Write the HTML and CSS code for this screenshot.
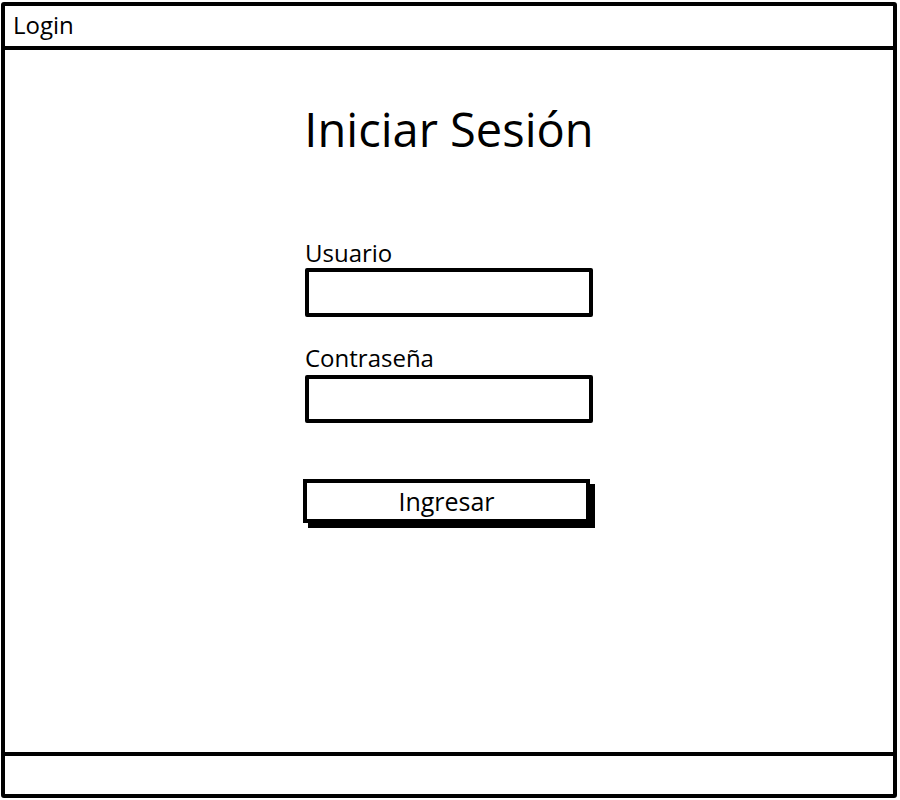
FILE: index.html
```html
<!DOCTYPE html>
<html lang="es">
<head>
<meta charset="utf-8">
<title>Login</title>
<link rel="stylesheet" href="styles.css">
</head>
<body>
<div class="window">
  <header class="titlebar">Login</header>
  <main class="content">
    <h1 class="title">Iniciar Sesión</h1>
    <form class="form">
      <label class="label">Usuario</label>
      <div class="field"></div>
      <label class="label label-second">Contraseña</label>
      <div class="field field-second"></div>
      <button type="button" class="button">Ingresar</button>
    </form>
  </main>
  <footer class="statusbar"></footer>
</div>
</body>
</html>
```

FILE: styles.css
```css
* { box-sizing: border-box; }
html, body { margin: 0; padding: 0; background: #fff; }
body { font-family: "Open Sans", "Noto Sans", sans-serif; color: #000; }
.window {
  width: 896px;
  height: 796px;
  margin: 2px 0 0 1px;
  border: 4px solid #000;
  border-radius: 3px;
  display: flex;
  flex-direction: column;
}
.titlebar {
  height: 44px;
  border-bottom: 4px solid #000;
  font-size: 24px;
  padding: 5px 0 0 8px;
  line-height: 1.2;
}
.content {
  flex: 1;
  display: flex;
  flex-direction: column;
  align-items: center;
}
.title {
  margin: 51px 0 0 0;
  font-size: 47px;
  font-weight: 400;
  line-height: 1.2;
}
.form {
  width: 288px;
  margin-top: 84px;
  display: flex;
  flex-direction: column;
}
.label {
  font-size: 24px;
  line-height: 24px;
  margin-bottom: 3px;
}
.label-second { margin-top: 29px; margin-bottom: 5px; }
.field {
  height: 49px;
  border: 4px solid #000;
  border-radius: 2px;
}
.field-second { height: 48px; }
.button {
  margin: 56px 0 0 -2px;
  width: 287px;
  height: 44px;
  border: 4px solid #000;
  background: #fff;
  box-shadow: 5px 5px 0 #000;
  font-family: inherit;
  font-size: 25px;
  color: #000;
  padding: 0;
}
.statusbar {
  height: 42px;
  border-top: 4px solid #000;
}
```
